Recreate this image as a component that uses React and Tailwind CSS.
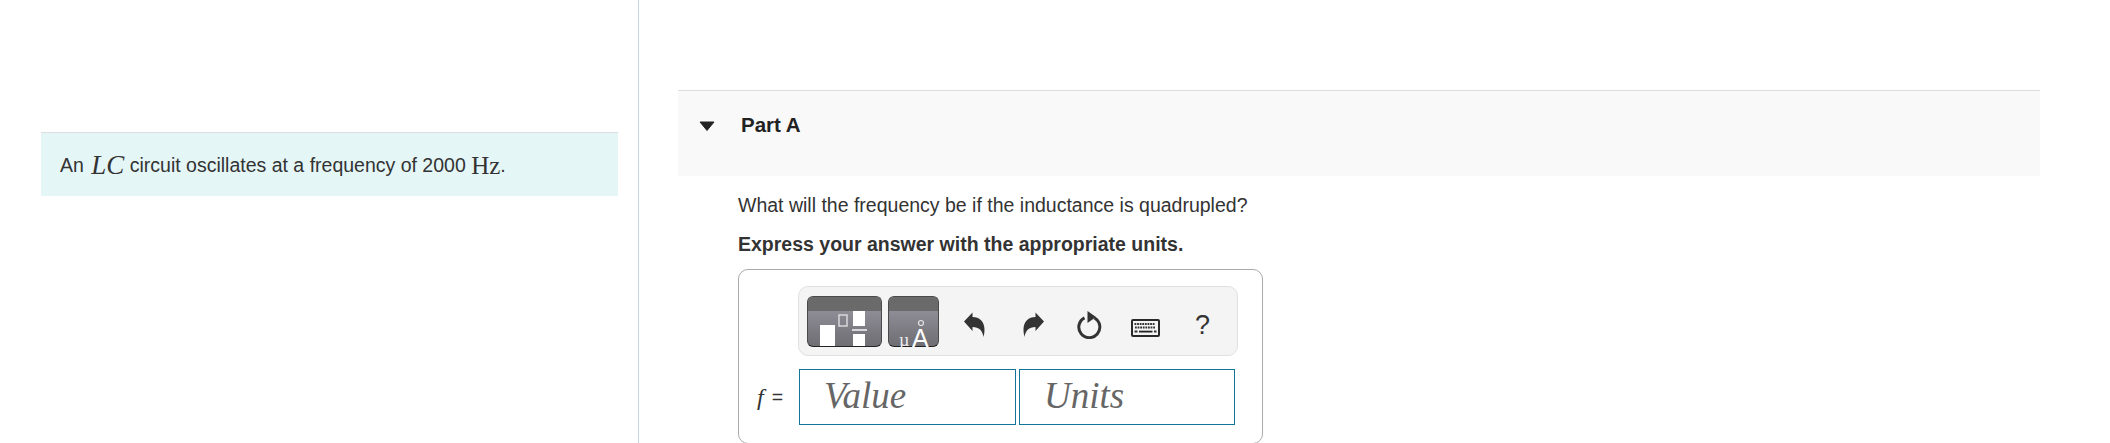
const sans = "font-['Liberation_Sans',Arial,sans-serif]";

function Undo({ flip }) {
  return (
    <svg width="21" height="25" viewBox="0 0 21 25" className={flip ? "-scale-x-100" : ""}>
      <path d="M0 9.5 L8.5 0.5 V5 C17 5 23 11.5 19.5 25 C18.5 18.5 15 15 8.5 15 V19 Z" fill="#333" />
    </svg>
  );
}

function Reset() {
  return (
    <svg width="26" height="28" viewBox="0 0 26 28">
      <path d="M8.5 6.8 A10.5 10.5 0 1 0 18.5 7" fill="none" stroke="#333" strokeWidth="3" />
      <path d="M11.5 0 L20 6 L11.5 12 Z" fill="#333" />
    </svg>
  );
}

function Keyboard() {
  const keys = [4, 6.6, 9.2, 11.8, 14.4, 17, 19.6, 22.2, 24.8];
  return (
    <svg width="29" height="18" viewBox="0 0 29 18">
      <rect x="1" y="1" width="27" height="16" rx="1" fill="#f4f4f4" stroke="#2a2a2a" strokeWidth="2" />
      {keys.slice(0, 8).map((x) => <rect key={"a" + x} x={x - 0.5} y="4" width="1.8" height="2" fill="#333" />)}
      {keys.slice(0, 8).map((x) => <rect key={"b" + x} x={x} y="7.5" width="1.8" height="2" fill="#333" />)}
      <rect x="3.5" y="11.5" width="3" height="2" fill="#333" />
      <rect x="8" y="11.7" width="13.5" height="1.8" fill="#222" />
      <rect x="23" y="11.5" width="2.5" height="2" fill="#333" />
    </svg>
  );
}

function TemplatesButton() {
  return (
    <div className="w-[75px] h-[51px] rounded-[6px] overflow-hidden border border-[#4a4a4a] border-b-[#222] bg-gradient-to-b from-[#9b99a4] to-[#6f6e73] shrink-0">
      <svg width="73" height="49" viewBox="1 1 73 49" className="block">
        <rect width="75" height="15" fill="#6a6a6a" />
        <rect x="13" y="29" width="15" height="21" fill="#fff" />
        <rect x="32" y="19" width="8" height="11" fill="none" stroke="#d8d8dc" strokeWidth="1.5" />
        <rect x="46" y="15" width="12" height="15" fill="#fff" />
        <rect x="45" y="33" width="15" height="2" fill="#d8d8dc" />
        <rect x="46" y="38" width="12" height="12" fill="#fff" />
      </svg>
    </div>
  );
}

function UnitsButton() {
  return (
    <div className="relative w-[51px] h-[51px] rounded-[6px] border border-[#4a4a4a] border-b-[#222] bg-gradient-to-b from-[#9b99a4] to-[#6f6e73] shrink-0">
      <div className="h-[14px] rounded-t-[5px] bg-[#6a6a6a]" />
      <svg width="8" height="8" viewBox="0 0 8 8" className="absolute left-[28px] top-[22px]">
        <circle cx="4" cy="4" r="2.5" fill="none" stroke="#e8e8e8" strokeWidth="1.2" />
      </svg>
      <span className="absolute left-[10px] bottom-[-3px] font-['Liberation_Serif',serif] text-[18px] leading-none text-[#f0f0f0]">µ</span>
      <span className="absolute left-[23px] bottom-[-5px] text-[25px] leading-none text-white">A</span>
    </div>
  );
}

export default function App() {
  return (
    <div className={`${sans} flex w-[2110px] h-[443px] overflow-hidden bg-white text-[#333]`}>
      <div className="w-[639px] shrink-0 border-r border-[#c5d5e2] pl-[41px] pr-[20px] pt-[132px]">
        <div className="h-[64px] border-t border-[#dcdfe0] bg-[#e5f6f7] pl-[19px] pt-[2px] flex items-center text-[19.5px] text-[#333]">
          <span>An&nbsp;</span>
          <span className="ml-[2px] font-['Liberation_Serif',serif] italic text-[27px] leading-none">LC</span>
          <span>&nbsp;circuit oscillates at a frequency of 2000&nbsp;</span>
          <span className="font-['Liberation_Serif',serif] text-[25px] leading-none">Hz</span>
          <span>.</span>
        </div>
      </div>

      <div className="flex-1 pl-[39px] pr-[70px] pt-[90px]">
        <div className="h-[86px] border-t border-[#dcdcdc] bg-[#f9f9f9] flex items-start pt-[22px]">
          <svg width="16" height="10" viewBox="0 0 16 10" className="ml-[21px] mt-[8px]">
            <path d="M1 1 H15 L8 9.5 Z" fill="#222" stroke="#222" strokeLinejoin="round" />
          </svg>
          <div className="ml-[26px] text-[20.5px] font-bold leading-[24px] text-[#222]">Part A</div>
        </div>

        <div className="pl-[60px]">
          <p className="mt-[17px] text-[19.5px] leading-[24px]">What will the frequency be if the inductance is quadrupled?</p>
          <p className="mt-[15px] text-[19.5px] leading-[24px] font-bold">Express your answer with the appropriate units.</p>

          <div className="mt-[13px] w-[525px] h-[175px] rounded-[10px] border border-[#aaa] pl-[59px] pt-[16px]">
            <div className="w-[440px] h-[70px] rounded-[10px] border border-[#e0e0e0] bg-[#f4f4f4] flex items-center pl-[8px]">
              <TemplatesButton />
              <div className="ml-[6px]"><UnitsButton /></div>
              <div className="ml-[25px] mt-[6px]"><Undo /></div>
              <div className="ml-[38px] mt-[6px]"><Undo flip /></div>
              <div className="ml-[32px] mt-[7px]"><Reset /></div>
              <div className="ml-[29px] mt-[14px]"><Keyboard /></div>
              <div className="ml-[35px] mt-[8px] text-[27px] leading-none text-[#333]">?</div>
            </div>
            <div className="relative ml-[1px] mt-[13px] flex gap-[3px]">
              <div className="absolute -left-[42px] top-[16px] flex items-center text-[19.5px] leading-[24px] text-[#333]">
                <span className="font-['Liberation_Serif',serif] italic text-[24px]">f</span>
                <span className="ml-[8px]">=</span>
              </div>
              <div className="w-[217px] h-[56px] border border-[#12769a] bg-white pl-[24px] pb-[2px] flex items-center font-['Liberation_Serif',serif] italic text-[37px] text-[#666]">Value</div>
              <div className="w-[216px] h-[56px] border border-[#12769a] bg-white pl-[24px] pb-[2px] flex items-center font-['Liberation_Serif',serif] italic text-[37px] text-[#666]">Units</div>
            </div>
          </div>
        </div>
      </div>
    </div>
  );
}
